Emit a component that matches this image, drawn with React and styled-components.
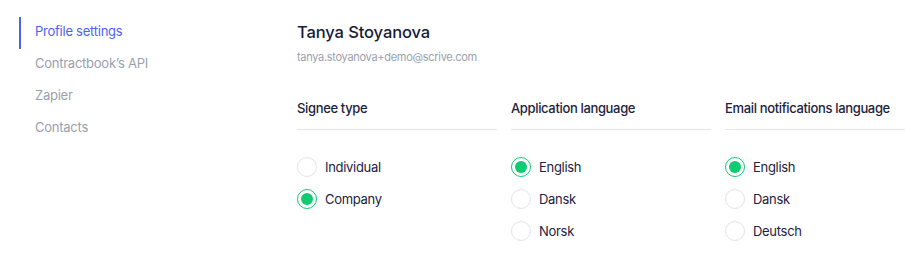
import React, { useState } from "react";
import styled, { createGlobalStyle } from "styled-components";

const GlobalStyle = createGlobalStyle`
  html, body {
    margin: 0;
    padding: 0;
    background: #ffffff;
    overflow: hidden;
  }
  body {
    font-family: Inter, "Liberation Sans", sans-serif;
    -webkit-font-smoothing: antialiased;
  }
`;

const Page = styled.div`
  display: flex;
  width: 905px;
  height: 262px;
  padding-top: 17px;
  box-sizing: border-box;
`;

const Sidebar = styled.nav`
  display: flex;
  flex-direction: column;
  width: 278px;
  padding-left: 19px;
  flex-shrink: 0;
`;

const NavItem = styled.a`
  display: flex;
  align-items: center;
  height: 32px;
  box-sizing: border-box;
  padding-bottom: 4px;
  padding-left: ${({ $active }) => ($active ? "14px" : "16px")};
  border-left: ${({ $active }) => ($active ? "2px solid #4b63f2" : "none")};
  font-size: 13px;
  letter-spacing: -0.25px;
  color: ${({ $active }) => ($active ? "#4b63f2" : "#9a9fae")};
  text-decoration: none;
  cursor: pointer;
`;

const Main = styled.main`
  display: flex;
  flex-direction: column;
  flex-shrink: 0;
`;

const Name = styled.h1`
  margin: 5px 0 0;
  font-size: 16.5px;
  font-weight: 500;
  line-height: 20px;
  letter-spacing: -0.1px;
  color: #161c38;
`;

const Email = styled.div`
  margin-top: 8px;
  font-size: 11px;
  line-height: 14px;
  letter-spacing: -0.3px;
  color: #9a9fae;
`;

const Columns = styled.div`
  display: grid;
  grid-template-columns: repeat(3, 200px);
  column-gap: 14px;
  margin-top: 34px;
`;

const Column = styled.section`
  display: flex;
  flex-direction: column;
`;

const ColumnTitle = styled.h2`
  margin: 0;
  padding: 2px 0 13px;
  border-bottom: 1px solid #e4e6eb;
  font-size: 13px;
  font-weight: 500;
  line-height: 16px;
  letter-spacing: -0.35px;
  color: #1d2240;
  white-space: nowrap;
`;

const Options = styled.div`
  display: flex;
  flex-direction: column;
  gap: 12px;
  padding-top: 27px;
`;

const Option = styled.label`
  display: flex;
  align-items: center;
  gap: 8px;
  font-size: 13px;
  line-height: 20px;
  letter-spacing: -0.3px;
  color: #1d2240;
  cursor: pointer;
`;

const Radio = styled.span`
  position: relative;
  width: 20px;
  height: 20px;
  box-sizing: border-box;
  border-radius: 50%;
  border: 1px solid ${({ $checked }) => ($checked ? "#0fcb72" : "#e2e4ea")};
  background: #ffffff;
  flex-shrink: 0;

  &::after {
    content: "";
    position: absolute;
    inset: 3px;
    border-radius: 50%;
    background: #0fcb72;
    display: ${({ $checked }) => ($checked ? "block" : "none")};
  }
`;

const groups = [
  { key: "signee", title: "Signee type", options: ["Individual", "Company"], initial: "Company" },
  { key: "app", title: "Application language", options: ["English", "Dansk", "Norsk"], initial: "English" },
  { key: "email", title: "Email notifications language", options: ["English", "Dansk", "Deutsch"], initial: "English" },
];

const navItems = ["Profile settings", "Contractbook’s API", "Zapier", "Contacts"];

const App = () => {
  const [values, setValues] = useState(
    groups.reduce((acc, g) => ({ ...acc, [g.key]: g.initial }), {})
  );

  return (
    <>
      <GlobalStyle />
      <Page>
        <Sidebar>
          {navItems.map((item, i) => (
            <NavItem key={item} $active={i === 0}>
              {item}
            </NavItem>
          ))}
        </Sidebar>
        <Main>
          <Name>Tanya Stoyanova</Name>
          <Email>tanya.stoyanova+demo@scrive.com</Email>
          <Columns>
            {groups.map(group => (
              <Column key={group.key}>
                <ColumnTitle>{group.title}</ColumnTitle>
                <Options>
                  {group.options.map(option => (
                    <Option
                      key={option}
                      onClick={() => setValues({ ...values, [group.key]: option })}
                    >
                      <Radio $checked={values[group.key] === option} />
                      {option}
                    </Option>
                  ))}
                </Options>
              </Column>
            ))}
          </Columns>
        </Main>
      </Page>
    </>
  );
};

export default App;
